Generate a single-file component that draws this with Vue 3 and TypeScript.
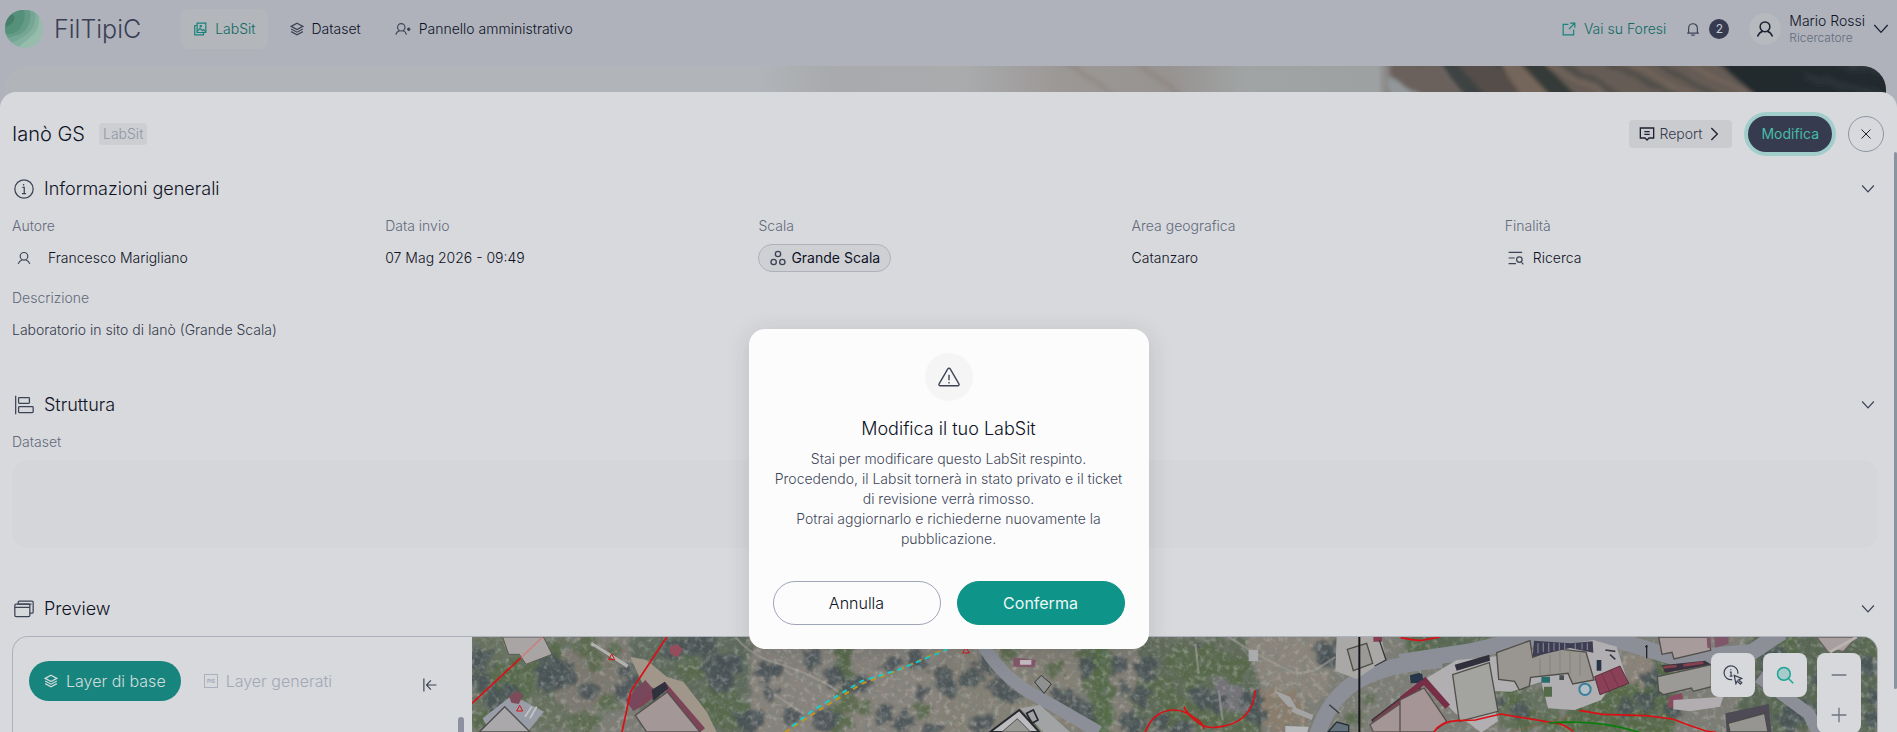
<script setup lang="ts">
import { ref } from 'vue'

interface NavItem { label: string; icon: string; active?: boolean }
interface Tree { x: number; y: number; r: number }

const nav: NavItem[] = [
  { label: 'LabSit', icon: 'gallery', active: true },
  { label: 'Dataset', icon: 'layers' },
  { label: 'Pannello amministrativo', icon: 'user-admin' },
]

const open = ref({ info: true, struct: true, preview: true })
const dialogOpen = ref(true)

const toTrees = (list: number[][]): Tree[] => list.map(([x, y, r]) => ({ x, y, r }))

const trees = toTrees([
  [20, 60, 34], [14, 130, 30], [60, 160, 26], [230, 90, 44], [270, 110, 40], [215, 130, 34], [340, 150, 26], [445, 150, 28],
  [455, 90, 20], [480, 130, 22], [60, 200, 30], [110, 160, 28], [730, 90, 48], [765, 70, 38], [750, 125, 34], [820, 240, 40],
  [690, 15, 34], [640, 20, 36], [590, 30, 30], [870, 100, 30], [1010, 60, 28], [1075, 110, 32], [1120, 140, 24], [1165, 130, 28],
  [1250, 75, 26], [1330, 60, 34], [1335, 155, 26], [1400, 110, 34], [1050, 240, 36], [1225, 225, 30], [1290, 250, 30], [1370, 275, 24],
  [950, 235, 32], [900, 90, 22], [880, 160, 24], [1420, 150, 26], [1490, 115, 34], [1535, 70, 30], [1575, 140, 36], [1610, 165, 24],
  [1520, 250, 30], [1765, 180, 40], [1830, 210, 34], [1835, 80, 30], [1930, 75, 22], [1945, 150, 18], [2015, 85, 34], [2000, 170, 28],
  [1970, 250, 36], [2060, 250, 30], [2120, 270, 32], [2180, 170, 34], [2225, 190, 28], [2330, 180, 34], [2350, 230, 28], [2170, 20, 16],
  [2555, 40, 38], [2570, 65, 32], [3060, 190, 22], [3140, 210, 28], [3530, 110, 30], [3510, 190, 34], [3560, 150, 28], [3450, 200, 26],
  [3600, 200, 28], [3900, 60, 40], [3880, 120, 28], [3950, 240, 38], [3990, 215, 34], [4040, 120, 26], [4180, 80, 30], [4190, 170, 24], [4200, 240, 24],
])
const bushes = toTrees([
  [30, 250, 34], [90, 110, 50], [150, 80, 40], [140, 145, 38], [240, 40, 30], [330, 20, 36], [360, 60, 34], [420, 30, 24],
  [330, 250, 40], [400, 190, 34], [650, 90, 36], [720, 170, 34], [790, 190, 32], [720, 220, 40], [770, 240, 34], [690, 200, 26],
  [1110, 60, 24], [1125, 110, 24], [1130, 190, 26], [1110, 250, 28], [1170, 210, 24], [1340, 210, 26], [1880, 90, 34], [1885, 160, 32],
  [1870, 230, 36], [1850, 130, 30], [1830, 50, 30], [2110, 60, 40], [2200, 70, 50], [2280, 90, 46], [2150, 110, 40], [2060, 150, 40],
  [2100, 210, 44], [2180, 230, 44], [2260, 250, 40], [2320, 260, 40], [1740, 90, 30], [1600, 20, 40], [1680, 250, 26], [2640, 240, 24],
  [2680, 180, 22], [2830, 30, 40], [2860, 60, 30], [3090, 20, 30], [3110, 180, 34], [3150, 240, 40], [3330, 220, 40], [3400, 200, 46],
  [3480, 240, 44], [3560, 230, 40], [3290, 170, 26], [3950, 20, 36], [3930, 120, 26], [4190, 30, 30], [4120, 220, 26], [3230, 250, 30],
])
</script>

<template>
  <div class="app">
    <svg class="sprite" aria-hidden="true">
      <symbol id="gallery" viewBox="0 0 24 24"><path d="M7 2h15v16H7zM7 6H3v16h15v-4M7 16l5-5 4 4 2-2 4 4M12.500 6h1.500v2h-1.500z" /></symbol>
      <symbol id="layers" viewBox="0 0 24 24"><path d="M12 2l10 5.500-10 5.500L2 7.500zM2 12l10 5.500L22 12M2 16.500L12 22l10-5.500" /></symbol>
      <symbol id="user-admin" viewBox="0 0 28 24"><circle cx="11" cy="9" r="6.500" /><path d="M1.500 22c1-4 4-6.500 6.500-7M20 22c-1-4-3.500-6.500-6-7" /><path d="M21 12.500h6M24 9.500v6M22 10.500l4 4M26 10.500l-4 4" /></symbol>
      <symbol id="external" viewBox="0 0 24 24"><path d="M11 4H2v18h18v-9M14 2h8v8M22 2L12 12" /></symbol>
      <symbol id="bell" viewBox="0 0 24 24"><path d="M2 19h20M4.500 19v-8.500a7.500 7.500 0 0 1 15 0V19M9 22.500h6" /></symbol>
      <symbol id="user" viewBox="0 0 24 24"><circle cx="12" cy="9" r="6.500" /><path d="M2 22c1.500-4 4-6 7-7M22 22c-1.500-4-4-6-7-7" /></symbol>
      <symbol id="down" viewBox="0 0 24 24"><path d="M2 6l10 11L22 6" /></symbol>
      <symbol id="right" viewBox="0 0 24 24"><path d="M8 3l9 9-9 9" /></symbol>
      <symbol id="close" viewBox="0 0 24 24"><path d="M3 3l18 18M21 3L3 21" /></symbol>
      <symbol id="report" viewBox="0 0 24 24"><path d="M2 3h20v15h-7l-3 3-3-3H2zM8 8.500h8M8 12.500h8" /></symbol>
      <symbol id="info" viewBox="0 0 24 24"><circle cx="12" cy="12" r="11" /><path d="M10 10h2.300v7M9.500 17.500h5M11.500 6v1.800" /></symbol>
      <symbol id="cells" viewBox="0 0 24 24"><circle cx="12" cy="6" r="4" /><circle cx="5.500" cy="18" r="4" /><circle cx="18.500" cy="18" r="4" /></symbol>
      <symbol id="find" viewBox="0 0 26 24"><path d="M1 3h22M1 12h10M1 21h12M22 19l3 3.500" /><circle cx="18.500" cy="14.500" r="4.500" /></symbol>
      <symbol id="struct" viewBox="0 0 24 24"><path d="M2 1v22" /><rect x="5.500" y="3" width="13" height="7" rx="1" /><rect x="5.500" y="14" width="17.500" height="7" rx="1" /></symbol>
      <symbol id="windows" viewBox="0 0 24 24"><rect x="1" y="6" width="18" height="15" rx="1.500" /><path d="M1 10h18M5 6V4a1.500 1.500 0 0 1 1.500-1.500h15A1.500 1.500 0 0 1 23 4v11.500a1.500 1.500 0 0 1-1.500 1.500H19M5 6h16" /></symbol>
      <symbol id="collapse" viewBox="0 0 24 24"><path d="M1.500 1v22M23 12H6M13.500 4L6 12l7.500 8" /></symbol>
      <symbol id="warn" viewBox="0 0 24 24"><path d="M10.700 3.100a1.500 1.500 0 0 1 2.600 0l9.500 16.400a1.300 1.300 0 0 1-1.200 2H2.400a1.300 1.300 0 0 1-1.200-2zM12 9.500v6M12 17.500v1.500" /></symbol>
      <symbol id="pick" viewBox="0 0 24 24"><path d="M11 17.500A8.300 8.300 0 1 1 17.800 10.500M8.200 8.500h1.500V13M8 13.200h3.500M9.300 5.200v1.200M13.500 12.500l9 3.500-3.800 1.800 3.800 3.500-1.700 1.600-3.700-3.700-1.600 3.300z" /></symbol>
      <symbol id="lens" viewBox="0 0 24 24"><circle cx="10.500" cy="10.500" r="8.500" fill="currentColor" fill-opacity=".25" /><path d="M17 17l6 6" /></symbol>
      <symbol id="minus" viewBox="0 0 24 24"><path d="M1 12h22" /></symbol>
      <symbol id="plus" viewBox="0 0 24 24"><path d="M1 12h22M12 1v22" /></symbol>
    </svg>

    <header class="topbar">
      <a class="brand" href="#">
        <svg class="logo" viewBox="0 0 40 40" aria-hidden="true">
          <clipPath id="logo-clip"><path d="M20 1C32 0 39 9 39 19c0 11-7 20-17 20C11 39 1 30 1 19 1 9 9 1 20 1z" /></clipPath>
          <g clip-path="url(#logo-clip)">
            <rect width="40" height="40" fill="#98bcac" />
            <path d="M0 0h33c4 10 2 20-4 26S16 36 12 40H0z" fill="#84b0a0" />
            <path d="M0 0h30c3 9 1 16-4 22S12 32 6 34H0z" fill="#75a593" />
            <path d="M0 0h26c2 9-1 15-4 20S10 28 0 29z" fill="#659b86" />
            <path d="M0 0h20c2 8 0 13-3 18S8 26 0 25z" fill="#54907a" />
            <path d="M2 18C1 10 6 5 9 6s2 8-7 12z" fill="#477d6b" />
          </g>
        </svg>
        <span>FilTipiC</span>
      </a>
      <nav class="nav">
        <a v-for="n in nav" :key="n.label" href="#" :class="{ active: n.active }">
          <svg class="icon s14" :class="{ wide: n.icon === 'user-admin' }"><use :href="'#' + n.icon" /></svg>{{ n.label }}
        </a>
      </nav>
      <a class="external" href="#"><svg class="icon s14"><use href="#external" /></svg>Vai su Foresi</a>
      <button class="bell" aria-label="Notifiche"><svg class="icon s14"><use href="#bell" /></svg><span class="badge">2</span></button>
      <button class="profile">
        <span class="avatar"><svg class="icon s18"><use href="#user" /></svg></span>
        <span class="who"><span class="name">Mario Rossi</span><span class="role">Ricercatore</span></span>
        <svg class="icon s16 dark"><use href="#down" /></svg>
      </button>
    </header>

    <div class="banner">
      <svg viewBox="0 0 1882 60" preserveAspectRatio="xMaxYMin slice" aria-hidden="true">
        <defs>
          <linearGradient id="sky">
            <stop offset="0" stop-color="#b1b4b8" /><stop offset=".4" stop-color="#b1b4b8" /><stop offset=".44" stop-color="#a8aaad" />
            <stop offset=".51" stop-color="#a9abad" /><stop offset=".56" stop-color="#9c9896" /><stop offset=".62" stop-color="#979391" />
            <stop offset=".66" stop-color="#a1a4a5" /><stop offset=".73" stop-color="#9da1a1" /><stop offset=".74" stop-color="#716965" />
          </linearGradient>
          <filter id="soft" x="-5%" y="-20%" width="110%" height="140%">
            <feTurbulence type="fractalNoise" baseFrequency=".05" numOctaves="3" seed="4" />
            <feDisplacementMap in="SourceGraphic" scale="18" /><feGaussianBlur stdDeviation="2" />
          </filter>
        </defs>
        <rect width="1882" height="60" fill="url(#sky)" />
        <g filter="url(#soft)">
          <path d="M1060-5l60 40M1130-5l70 50" stroke="#8b817b" stroke-width="5" opacity=".5" />
          <path d="M1382-5h50l50 70h-70z" fill="#6a605c" />
          <path d="M1390 14l30 18v25h-50z" fill="#93979a" />
          <path d="M1435-5h80l70 70h-100z" fill="#3e4342" />
          <path d="M1450-5l30-5 90 70h-60z" fill="#544e4a" />
          <path d="M1495-5h26l60 60h-46z" fill="#75665b" />
          <path d="M1514-5h24l60 60h-28z" fill="#353b37" />
          <path d="M1538-5h186l90 60h-215z" fill="#655b54" />
          <path d="M1555-5l90 50M1600-5l80 40M1650-5l70 40" stroke="#504d49" stroke-width="5" />
          <path d="M1540-5l90 50M1620-5l90 45M1680-5l80 40" stroke="#73665c" stroke-width="4" />
          <path d="M1712-5h190v70h-110z" fill="#23292d" />
          <path d="M1800 10l80 20M1820-5l60 10" stroke="#2c3337" stroke-width="8" />
        </g>
      </svg>
    </div>

    <main class="sheet">
      <div class="head">
        <h1>Ianò GS</h1>
        <span class="tag">LabSit</span>
        <span class="spacer"></span>
        <button class="report"><svg class="icon s16 dark"><use href="#report" /></svg>Report<svg class="icon s16 dark"><use href="#right" /></svg></button>
        <button class="edit">Modifica</button>
        <button class="round" aria-label="Chiudi"><svg class="icon s12 dark"><use href="#close" /></svg></button>
      </div>

      <section class="info">
        <div class="bar">
          <svg class="icon s20"><use href="#info" /></svg>
          <h2>Informazioni generali</h2>
          <button aria-label="Comprimi informazioni" @click="open.info = !open.info"><svg class="icon s14"><use href="#down" /></svg></button>
        </div>
        <template v-if="open.info">
          <dl class="grid">
            <div><dt>Autore</dt><dd class="author"><svg class="icon s14"><use href="#user" /></svg>Francesco Marigliano</dd></div>
            <div><dt>Data invio</dt><dd>07 Mag 2026 - 09:49</dd></div>
            <div><dt>Scala</dt><dd><span class="chip"><svg class="icon s16"><use href="#cells" /></svg>Grande Scala</span></dd></div>
            <div><dt>Area geografica</dt><dd>Catanzaro</dd></div>
            <div><dt>Finalità</dt><dd class="purpose"><svg class="icon s16"><use href="#find" /></svg>Ricerca</dd></div>
          </dl>
          <dl class="grid desc"><div><dt>Descrizione</dt><dd>Laboratorio in sito di Ianò (Grande Scala)</dd></div></dl>
        </template>
      </section>

      <section class="structure">
        <div class="bar">
          <svg class="icon s20"><use href="#struct" /></svg>
          <h2>Struttura</h2>
          <button aria-label="Comprimi struttura" @click="open.struct = !open.struct"><svg class="icon s14"><use href="#down" /></svg></button>
        </div>
        <template v-if="open.struct">
          <h3>Dataset</h3>
          <div class="empty"></div>
        </template>
      </section>

      <section class="preview">
        <div class="bar">
          <svg class="icon s20"><use href="#windows" /></svg>
          <h2>Preview</h2>
          <button aria-label="Comprimi preview" @click="open.preview = !open.preview"><svg class="icon s14"><use href="#down" /></svg></button>
        </div>
        <div v-if="open.preview" class="viewer">
          <aside class="side">
            <div class="tabs">
              <button class="tab on"><svg class="icon s14"><use href="#layers" /></svg>Layer di base</button>
              <button class="tab" disabled>
                <svg class="pis" viewBox="0 0 14 14"><rect x=".5" y=".5" width="13" height="13" /><text x="7" y="9" text-anchor="middle">PIS</text></svg>Layer generati
              </button>
              <button class="collapse" aria-label="Riduci pannello"><svg class="icon s14"><use href="#collapse" /></svg></button>
            </div>
            <div class="side-scroll"></div>
          </aside>
          <div class="map">
            <svg class="aerial" viewBox="0 0 4215 285" preserveAspectRatio="xMinYMin slice" aria-hidden="true">
              <defs>
                <filter id="rough" x="0" y="0" width="100%" height="100%">
                  <feTurbulence type="fractalNoise" baseFrequency=".035" numOctaves="3" seed="8" />
                  <feDisplacementMap in="SourceGraphic" scale="60" xChannelSelector="R" yChannelSelector="G" />
                  <feGaussianBlur stdDeviation="4" />
                </filter>
                <filter id="grain" x="0" y="0" width="100%" height="100%">
                  <feTurbulence type="fractalNoise" baseFrequency=".045" numOctaves="4" seed="3" />
                  <feColorMatrix values="0 0 0 0 .18  0 0 0 0 .22  0 0 0 0 .2  2.600 0 0 0 -1.150" />
                </filter>
                <filter id="specks" x="0" y="0" width="100%" height="100%">
                  <feTurbulence type="fractalNoise" baseFrequency=".06" numOctaves="3" seed="21" />
                  <feColorMatrix values="0 0 0 0 .7  0 0 0 0 .69  0 0 0 0 .66  0 2.600 0 0 -1.300" />
                </filter>
              </defs>
              <rect width="4215" height="285" fill="#7d7d75" />
              <g filter="url(#rough)">
                <path d="M0 0h330v285H0z" fill="#66705d" />
                <path d="M280 30h200l-40 130-120 100-80-100z" fill="#7d786f" />
                <path d="M460-20h380v330H520z" fill="#5f6a5c" />
                <path d="M835-20h580v330H835z" fill="#88837b" />
                <path d="M1404 0h420v285h-420z" fill="#858076" />
                <path d="M1862-20h50l10 320h-70z" fill="#567049" />
                <path d="M1920-20h100l-40 320h-60z" fill="#837f76" />
                <path d="M2010 0h330l40 285h-420z" fill="#5e6b58" />
                <path d="M2230 60l90 120v105h-40l-60-160z" fill="#757378" />
                <path d="M2310-10h260v200h-100l-110-60z" fill="#8b857b" />
                <path d="M2350 150l120 10 40 100-130 20z" fill="#8b7d6d" />
                <path d="M2784-10h260v60l-180 50z" fill="#586752" />
                <path d="M3080 150h180l10 130h-200z" fill="#64705b" />
                <path d="M3290 190l180-70 80-90 60 40v220h-340z" fill="#566b47" />
                <path d="M3440 60l90-10 30 50-50 50-40-10z" fill="#8b8379" />
                <path d="M3830-10h385v300h-430z" fill="#596653" />
                <path d="M1090-20l40 0 15 160-50 170h-30l30-160z" fill="#5d6c50" />
                <circle v-for="(t, i) in bushes" :key="'b' + i" :cx="t.x + 8" :cy="t.y + 8" :r="t.r" fill="#57694a" opacity=".85" />
                <circle v-for="(t, i) in trees" :key="'t' + i" :cx="t.x + 8" :cy="t.y + 8" :r="t.r" fill="#485156" opacity=".85" />
              </g>
              <g fill="none" stroke="#a39f97" stroke-width="7" opacity=".6">
                <path d="M790 0q50 60 130 80 120 40 180 85M905 170l90 60M2270 0l80 50 120 60 60-10 60-40M2170 20l10 90M2240 160l12 90" />
              </g>
              <rect width="4215" height="285" filter="url(#grain)" opacity=".5" />
              <rect width="4215" height="285" filter="url(#specks)" opacity=".35" />

              <g fill="none" stroke="#8c8f98" stroke-width="38">
                <path d="M1530 20q60 100 150 150t200 115" />
                <path d="M2530 310q40-130 130-180t250-60M2784 75l200-30 180-40M3080 5h340l200 60 220-20 90-60" stroke-width="48" />
                <path d="M3860 120l150 110 40 80" />
              </g>

              <g transform="translate(-6 -111)">
                <path d="M98 111l18 52h32l20 30 78-30-26-52z" fill="#a8a5a4" stroke="#5c5c54" stroke-width="3" />
                <path d="M366 126l110 68-6 10-108-68z" fill="#b0b0ac" />
                <path d="M370 140l98 64" stroke="#686b64" stroke-width="3" />
                <path d="M480 170l50 10 60 50 50 15 70 90 30 61h-80l-60-120-80-20z" fill="#a0968a" />
                <path d="M600 140l22-8 16 16-14 24-24-10z" fill="#944d5d" />
                <path d="M466 300l60-60 26 30 4 20-66 44z" fill="#79475c" />
                <path d="M545 270l40-25 120 140-14 11-110-130-60 50-26 10z" fill="#7d4458" />
                <path d="M545 270l40-25 10 20-45 38z" fill="#30313e" />
                <path d="M496 346l96-70 98 120H530z" fill="#a49798" stroke="#55504f" stroke-width="4" />
                <path d="M38 355l90-70 94 50-50 61H60z" fill="#999da7" />
                <path d="M28 396l76-76 76 76z" fill="#aaa8aa" stroke="#4d4e4e" stroke-width="4" />
                <path d="M118 290l20-18 22 14-14 26-22-4z" fill="#7e4b5b" />
                <path d="M165 350l20-30M180 355l20-35" stroke="#c6c6c8" stroke-width="5" />
              </g>

              <g transform="translate(1404 -111)">
                <path d="M220 172l68 8-4 22-64-2z" fill="#84596b" /><path d="M240 180h34v14h-34z" fill="#c5bdc2" />
                <path d="M284 246l20-20 30 26-22 28z" fill="#8f9090" stroke="#30343a" stroke-width="3" />
                <path d="M150 396l88-66 60 66z" fill="#bcbcbe" stroke="#26282f" stroke-width="6" />
                <path d="M186 396l46-40 40 40z" fill="#979894" stroke="#4f504a" stroke-width="3" />
                <path d="M240 325l60-10 90 81h-80z" fill="#a2a3a4" /><path d="M260 340l20-10 14 30-18 10z" fill="none" stroke="#25292f" stroke-width="5" />
                <path d="M926 150h28v34h-28z" fill="#a9abac" />
                <path d="M1000 270l50 20 20 35-25-5zM1060 320l60 25-5 15-60-25z" fill="#a3a4a3" /><path d="M1036 378l70 2-4 16h-66z" fill="#b8b9ba" />
                <path d="M1190 111h134l14 66-88 60-64-24z" fill="#aaa8a6" />
                <path d="M1222 148l58-18 18 60-58 22z" fill="#9c9a98" stroke="#4c4e43" stroke-width="4" />
                <path d="M1300 111h26v14h-26z" fill="#873d52" /><path d="M1318 120l20 60-34 18" fill="none" stroke="#35363c" stroke-width="4" />
                <path d="M1296 360l144-110v30l-130 100z" fill="#7b3e4f" stroke="#362e35" stroke-width="4" />
                <path d="M1290 374l150-104v126h-140z" fill="#a49597" stroke="#5d5553" stroke-width="4" />
                <path d="M1410 226l30-8v30l-28 2z" fill="#263344" /><path d="M1164 396l26-30 36 10v20z" fill="#63717c" stroke="#263038" stroke-width="4" />
                <path d="M1168 314l30 26" stroke="#333940" stroke-width="4" />
              </g>

              <g transform="translate(2784 -171)">
                <path d="M70 300l100-60 110-10 300-50 70 20 34 110-60 20-20 30-80 30-80-5-20-80-90 30-60-2 20 90-50 35-80-60z" fill="#b1afb1" />
                <path d="M164 254l104-30 2 18-100 30z" fill="#30303c" />
                <path d="M0 350l76-60 74 84-14 12-64-70-72 50z" fill="#762f47" />
                <path d="M0 360l72-36 68 100-40 32H0z" fill="#a69597" stroke="#554d4a" stroke-width="4" />
                <path d="M30 290l36-10 4 20-34 10z" fill="#27364a" />
                <path d="M158 284l110-36 26 146-116 30z" fill="#a3a3a0" stroke="#51514a" stroke-width="4" />
                <path d="M290 218l100-36 8 50 70-26 90 10 24 84-64 12-14-32-112 12-4 26-30 12-14-26-48-6z" fill="#999590" stroke="#4e4d47" stroke-width="4" />
                <path d="M402 182l110 8 66-6 2 34-70-14-112 26z" fill="#3e3d51" />
                <path d="M414 190v30M430 188v28M446 188v28M462 188v24M478 188v24M494 188v24M526 190v18M546 190v18M562 188v22" stroke="#77788d" stroke-width="4" />
                <path d="M420 235v50M450 225v55M480 215v60M510 212v70M540 218v70" stroke="#85827c" stroke-width="3" />
                <path d="M584 290l76-32 26 52-86 34z" fill="#8a4057" stroke="#5b2f3d" stroke-width="3" />
                <path d="M606 284l24 52M632 270l24 52" stroke="#743349" stroke-width="3" />
                <path d="M590 240h14v32h-14z" fill="#283548" /><path d="M616 210l30 4M630 224l16 14" stroke="#373a42" stroke-width="5" />
                <circle cx="555" cy="328" r="17" fill="#b4bec5" stroke="#387f9d" stroke-width="6" />
                <path d="M424 290h26v18h-26z" fill="#2a6c6d" /><path d="M432 320h24v30h-24z" fill="#546b4a" /><path d="M478 286h14v14h-14z" fill="#474e52" />
                <path d="M776 171h150l6 40-110 26-6-20-30 6z" fill="#a79b9c" stroke="#504d48" stroke-width="4" />
                <path d="M920 171h12v32h-10zM942 171h44v20l-40 12z" fill="#80566a" />
                <path d="M785 256l130-14 20 12-140 24z" fill="#3a333f" /><path d="M790 262l40-4M850 256l60-8" stroke="#87404d" stroke-width="8" />
                <path d="M772 290l162-36v66l-54 14-6-10-84 20-14-10z" fill="#9c9a97" stroke="#505149" stroke-width="4" />
                <path d="M806 350l40-12 4 30-46 18z" fill="#894a60" /><path d="M820 360l150-10-10 30-90 14-50-6z" fill="#b1adb0" />
                <path d="M976 400l130-28 8 84H980z" fill="#4e4b57" />
                <path d="M984 430l110-30 10 56H990z" fill="#979592" stroke="#494b45" stroke-width="4" />
                <path d="M1250 171h120l-40 44-24-6-20 10z" fill="#a99fa0" stroke="#65635c" stroke-width="4" />
                <path d="M1290 216l80-45" stroke="#bab4ae" stroke-width="8" />
                <path d="M740 195v40M735 200h8" stroke="#23242a" stroke-width="4" />
              </g>

              <g fill="none" stroke="#dc0f14" stroke-width="5" stroke-linejoin="round">
                <path d="M0 199L146 63M584 0L476 164 450 285" />
                <path d="M146 63L212 0" opacity=".5" stroke="#ef5a5a" />
                <path d="M410 68l9-17 9 17zM134 222l9-17 9 17z" stroke-width="3" />
                <path d="M1472 48l10-17 10 17z" stroke-width="3" />
                <path d="M2020 285q24-66 88-66 34 0 60 30 28 26 64 22 110-10 118-112M2136 209q10 24 32 34t28 32" />
                <path d="M2786 2l30 5 28 4 60-11" />
                <path d="M2886 285q20-32 70-34l54-2 76-18 60 10 120 20 20 10 18 12" />
                <path d="M3322 220l70 12 130 4 80 10q50 20 100 36l30 4" />
                <path d="M3300 234l-30 12-60 16-90 20" stroke="#a8553d" stroke-dasharray="4 10" stroke-width="4" />
              </g>
              <path d="M3230 258q150-12 272 28" fill="none" stroke="#087d0b" stroke-width="5" />
              <g fill="none" stroke-width="6" stroke-dasharray="16 14">
                <path d="M940 285l120-78 110-67 120-45 130-60 70-35" stroke="#c79418" />
                <path d="M950 276l70-54 150-90 110-34 130-54 70-40" stroke="#19cbd2" stroke-dashoffset="16" />
              </g>
              <path d="M2662 0v285" stroke="#15171a" stroke-width="6" />
            </svg>
            <div class="tools">
              <button aria-label="Interroga mappa"><svg class="icon s20"><use href="#pick" /></svg></button>
              <button class="teal" aria-label="Cerca"><svg class="icon s18"><use href="#lens" /></svg></button>
              <div class="zoom">
                <button aria-label="Riduci"><svg class="icon s16"><use href="#minus" /></svg></button>
                <button aria-label="Ingrandisci"><svg class="icon s16"><use href="#plus" /></svg></button>
              </div>
            </div>
          </div>
        </div>
      </section>
      <div class="thumb"></div>
    </main>

    <div v-if="dialogOpen" class="overlay">
      <div class="dialog" role="alertdialog" aria-labelledby="dlg-title" aria-describedby="dlg-text">
        <span class="warn"><svg class="icon s22"><use href="#warn" /></svg></span>
        <h2 id="dlg-title">Modifica il tuo LabSit</h2>
        <p id="dlg-text">Stai per modificare questo LabSit respinto.<br />Procedendo, il Labsit tornerà in stato privato e il ticket di revisione verrà rimosso.<br />Potrai aggiornarlo e richiederne nuovamente la pubblicazione.</p>
        <div class="actions">
          <button @click="dialogOpen = false">Annulla</button>
          <button class="primary" @click="dialogOpen = false">Conferma</button>
        </div>
      </div>
    </div>
  </div>
</template>

<style>
body { margin: 0; background: #afb2bb; }
</style>

<style scoped>
* { box-sizing: border-box; }
.app { height: 100vh; display: flex; flex-direction: column; overflow: hidden; position: relative; background: #afb2bb; color: #0e1226; font: 300 14px/20px Inter, sans-serif; }
.sprite { position: absolute; width: 0; height: 0; }
h1, h2, h3, p, dl, dd { margin: 0; font-weight: 300; }
button { font: inherit; color: inherit; background: none; border: 0; padding: 0; cursor: pointer; display: flex; align-items: center; justify-content: center; }
a { color: inherit; text-decoration: none; }
.icon { fill: none; stroke: currentColor; stroke-width: 2; flex: none; color: #3d4356; }
.dark { color: #1d2133; }
.s12 { width: 12px; height: 12px; }
.s14 { width: 14px; height: 14px; }
.s16 { width: 16px; height: 16px; }
.s18 { width: 18px; height: 18px; }
.s20 { width: 20px; height: 20px; stroke-width: 1.5; }
.s22 { width: 22px; height: 22px; stroke-width: 1.5; }
.wide { width: 16px; }

.topbar { height: 66px; flex: none; display: flex; align-items: center; padding: 0 8px 8px 4px; }
.brand { display: flex; align-items: center; gap: 10px; font-size: 25px; line-height: 32px; color: #3a3f55; }
.logo { width: 40px; height: 40px; }
.nav { display: flex; gap: 10px; margin-left: 40px; flex: 1; }
.nav a { height: 40px; display: flex; align-items: center; gap: 8px; padding: 0 12px; border-radius: 8px; }
.nav .active { background: #b3b7bb; color: #106a63; }
.active .icon, .external .icon { color: #16827b; }
.external { display: flex; align-items: center; gap: 8px; color: #106a63; margin-right: 20px; }
.bell { gap: 9px; margin-right: 20px; }
.badge { width: 20px; height: 20px; border-radius: 50%; background: #363b50; color: #c9ccd3; font-size: 12px; font-weight: 400; }
.profile { text-align: left; }
.avatar { width: 32px; height: 32px; border-radius: 50%; background: #b6b9bd; display: grid; place-items: center; margin-right: 8px; }
.avatar .icon { color: #1d2133; }
.who { display: flex; flex-direction: column; margin-right: 8px; }
.name { line-height: 18px; }
.role { font-size: 12px; line-height: 16px; color: #646b7b; }

.banner { height: 56px; flex: none; margin: 0 11px -30px 4px; border-radius: 24px 24px 0 0; overflow: hidden; }
.banner svg { width: 100%; height: 60px; display: block; }

.sheet { flex: 1; min-height: 0; overflow: hidden; position: relative; background: #d8d9dc; border-radius: 16px 16px 0 0; padding: 24px 19px 0 12px; display: flex; flex-direction: column; }
.thumb { position: absolute; right: 0; top: 60px; width: 3px; bottom: 43px; border-radius: 3px; background: #8b939f; }
.head { display: flex; align-items: center; height: 36px; flex: none; margin-right: -6px; }
h1 { font-size: 20px; line-height: 28px; }
.tag { margin-left: 14px; padding: 1px 4px; border-radius: 4px; background: #cdced2; color: #9096a4; }
.spacer { flex: 1; }
.report { height: 28px; padding: 0 10px; gap: 4px; border-radius: 4px; background: #cacbce; color: #343a4d; margin-right: 16px; }
.edit { height: 36px; padding: 0 13px; border-radius: 18px; background: #363b50; color: #46bda7; box-shadow: 0 0 0 4px #a1cecb; margin-right: 16px; font-weight: 400; }
.round { width: 36px; height: 36px; border: 1px solid #8d94a4; border-radius: 50%; }

section { flex: none; }
.bar { display: flex; align-items: center; gap: 10px; height: 28px; padding-left: 2px; }
.bar h2 { font-size: 18px; line-height: 28px; flex: 1; }
.bar button { width: 20px; height: 20px; }
.info { margin-top: 23px; height: 216px; }
.grid { display: grid; grid-template-columns: repeat(5, 1fr); margin-top: 13px; }
dt, h3 { font-size: 14px; line-height: 20px; color: #626a7c; }
dd { display: flex; align-items: center; height: 28px; margin-top: 8px; }
.author { gap: 17px; padding-left: 5px; }
.purpose { gap: 9px; padding-left: 3px; }
.chip { display: flex; align-items: center; gap: 5px; height: 28px; padding: 0 10px 0 11px; border: 1px solid #adb1b9; border-radius: 14px; background: #cfd0d4; font-weight: 400; }
.desc { grid-template-columns: 1fr; margin-top: 16px; }
.desc dd { color: #343a4d; }
.structure h3 { margin-top: 13px; }
.empty { height: 88px; margin-top: 8px; border-radius: 16px; background: #d5d6d9; }
.preview { margin-top: 47px; flex: 1 0 auto; display: flex; flex-direction: column; }
.viewer { flex: 1; min-height: 96px; margin-top: 13px; border: 1px solid #adb2bc; border-bottom: 0; border-radius: 16px 16px 0 0; display: flex; overflow: hidden; }
.side { width: 459px; flex: none; position: relative; }
.tabs { display: flex; align-items: center; padding: 24px 35px 0 16px; }
.tab { height: 40px; padding: 0 15px; gap: 8px; border-radius: 20px; font-size: 16px; color: #a2a8b6; }
.tab + .tab { margin-left: 8px; }
.tab.on { background: #17857d; color: #d3dcdd; }
.on .icon { color: inherit; }
.pis { width: 14px; height: 14px; fill: none; stroke: #abb0bd; }
.pis text { font: 700 5px Inter, sans-serif; fill: #a2a8b6; stroke: none; }
.collapse { margin-left: auto; padding-top: 8px; }
.side-scroll { position: absolute; right: 8px; top: 80px; bottom: -10px; width: 6px; border-radius: 3px; background: #8b919f; }
.map { flex: 1; position: relative; overflow: hidden; background: #797970; }
.aerial { width: 100%; height: 100%; display: block; }
.tools { position: absolute; right: 16px; top: 16px; display: flex; align-items: flex-start; gap: 8px; color: #3d4356; }
.tools > button, .zoom { width: 44px; border-radius: 8px; background: #d6d8db; }
.tools > button { height: 44px; }
.teal .icon { color: #1aa596; }
.zoom { margin-left: 2px; }
.zoom button { width: 44px; height: 44px; }
.zoom button + button { height: 36px; }
.zoom .icon { color: #6d7482; }

.overlay { position: absolute; inset: 0; display: grid; place-items: center; }
.dialog { width: 400px; margin-top: 246px; padding: 24px; border-radius: 16px; background: #fcfcfc; box-shadow: 0 4px 24px rgba(29, 33, 51, .14); display: flex; flex-direction: column; align-items: center; text-align: center; }
.warn { width: 48px; height: 48px; border-radius: 50%; background: #f5f5f6; display: grid; place-items: center; }
.dialog h2 { margin-top: 16px; font-size: 18px; line-height: 24px; }
.dialog p { margin-top: 8px; color: #42485b; }
.actions { display: flex; gap: 16px; margin-top: 32px; align-self: stretch; }
.actions button { flex: 1; height: 44px; border: 1px solid #a0a5b8; border-radius: 22px; font-size: 16px; }
.actions .primary { border-color: #0e9488; background: #0e9488; color: #ecf7f5; font-weight: 400; }
</style>
